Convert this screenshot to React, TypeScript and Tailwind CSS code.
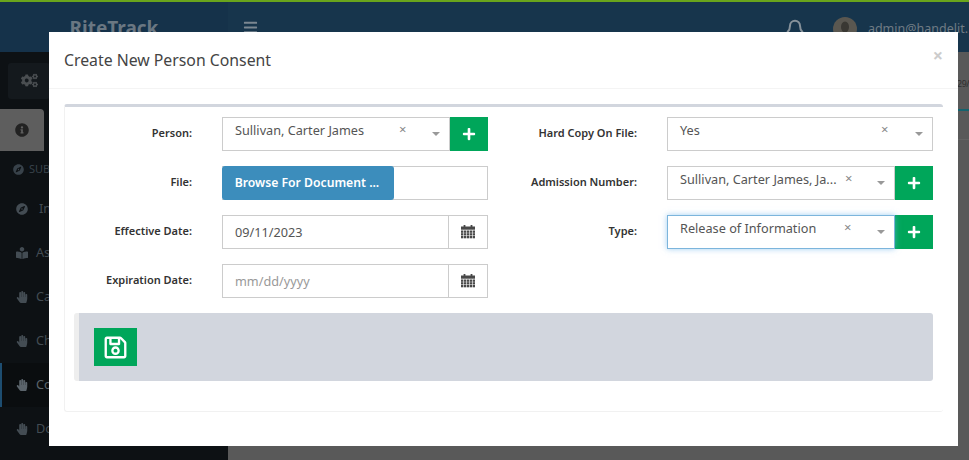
import { Bell } from "lucide-react";
import { FaBars, FaCogs, FaCompass, FaInfoCircle, FaPlus, FaRegSave, FaBookReader, FaHandPaper } from "react-icons/fa";

const font = "font-['Noto_Sans','Open_Sans',sans-serif]";

const sideItems = [
  { label: "In", Icon: FaCompass, gap: "gap-[11px]", active: false },
  { label: "As", Icon: FaBookReader, gap: "gap-[8px]", active: false },
  { label: "Ca", Icon: FaHandPaper, gap: "gap-[8px]", active: false },
  { label: "Ch", Icon: FaHandPaper, gap: "gap-[8px]", active: false },
  { label: "Co", Icon: FaHandPaper, gap: "gap-[8px]", active: true },
  { label: "Do", Icon: FaHandPaper, gap: "gap-[8px]", active: false },
];

function Label({ children, width }: { children: React.ReactNode; width: string }) {
  return <label className={`${width} shrink-0 whitespace-nowrap pb-[2px] text-right text-[11px] font-semibold text-[#333]`}>{children}</label>;
}

function Select({ value, width, xLeft, focus }: { value: string; width: string; xLeft: string; focus?: boolean }) {
  return (
    <div
      className={`relative h-[34px] ${width} shrink-0 border bg-white text-[#555] ${focus ? "border-[#7cb5dc] shadow-[0_0_6px_rgba(102,175,233,0.6)]" : "border-[#ccc]"}`}
    >
      <span className="absolute left-[12px] top-[3px] text-[12.7px] leading-[18px] whitespace-nowrap">{value}</span>
      <span className={`absolute top-[2px] text-[13px] leading-[18px] text-[#888] ${xLeft}`}>×</span>
      <span className="absolute right-[9px] top-[14px] h-0 w-0 border-x-[4px] border-t-[4px] border-x-transparent border-t-[#999]" />
    </div>
  );
}

function PlusButton() {
  return (
    <button className="flex h-[34px] w-[38px] shrink-0 items-center justify-center bg-[#00a65a] text-white">
      <FaPlus size={14} />
    </button>
  );
}

// solid grid calendar, the package ones come out too open at this size
function CalendarIcon() {
  const cols = [0, 3, 6, 9, 12];
  const rows = [5.5, 8.2, 11];
  return (
    <svg width="14" height="14" viewBox="0 0 14 14" fill="#484848">
      <rect x="0" y="1.5" width="14" height="3.2" />
      <rect x="2.6" y="0" width="1.8" height="2.6" />
      <rect x="9.6" y="0" width="1.8" height="2.6" />
      {rows.map((y) => cols.map((x) => <rect key={`${x}-${y}`} x={x} y={y} width="2.4" height="2.3" />))}
    </svg>
  );
}

function DateField({ value, placeholder }: { value?: string; placeholder?: string }) {
  return (
    <div className="flex h-[34px] w-[266px] shrink-0 border border-[#ccc] bg-white">
      <span className={`flex-1 pl-[12px] text-[12.7px] leading-[33px] ${value ? "text-[#555]" : "text-[#999]"}`}>
        {value ?? placeholder}
      </span>
      <span className="flex w-[39px] items-center justify-center border-l border-[#ccc]">
        <CalendarIcon />
      </span>
    </div>
  );
}

export default function App() {
  return (
    <div className={`relative h-[460px] w-[969px] overflow-hidden bg-[#595959] ${font}`}>
      <div className="h-[2px] bg-[#6aa51c]" />
      <header className="flex h-[50px] bg-[#17354c]">
        <div className="flex w-[228px] justify-center bg-[#15324a] pt-[14px] text-[19px] font-bold leading-[24px] text-[#6a7782]">
          RiteTrack
        </div>
        <div className="flex flex-1 items-start justify-between pl-[15px] pt-[15px] text-[#7b8791]">
          <FaBars size={15} className="mt-[3px]" />
          <div className="flex items-center gap-[28px]">
            <Bell size={20} strokeWidth={2.4} className="-mt-[1px] text-[#87929a]" />
            <div className="flex items-center gap-[11px]">
              <svg width="24" height="24" viewBox="0 0 24 24">
                <circle cx="12" cy="12" r="12" fill="#5a5750" />
                <ellipse cx="12" cy="10" rx="4" ry="5.5" fill="#3a3833" />
                <path d="M4 21c2-5 5-6 8-6s6 1 8 6a12 12 0 0 1-16 0z" fill="#33312d" />
              </svg>
              <span className="whitespace-nowrap pr-[1px] text-[12.5px] text-[#6f7b84]">admin@handelit.</span>
            </div>
          </div>
        </div>
      </header>

      <div className="flex">
        <aside className="h-[408px] w-[228px] shrink-0 bg-[#0d1114]">
          <div className="flex h-[57px] items-center pl-[8px]">
            <div className="flex h-[36px] w-[42px] items-center justify-center rounded-[3px] bg-[#14191d] text-[#4a4e51]">
              <FaCogs size={17} />
            </div>
          </div>
          <div className="flex h-[42px] w-[44px] items-center justify-center rounded-tr-[4px] bg-[#5e5e5e] text-[#222]">
            <FaInfoCircle size={14} />
          </div>
          <div className="flex h-[36px] items-center gap-[5px] pl-[13px] text-[11px] text-[#38424a]">
            <FaCompass size={11} /> SUBJECT
          </div>
          {sideItems.map(({ label, Icon, gap, active }) => (
            <div
              key={label}
              className={`flex h-[44px] items-center ${gap} text-[12.7px] ${active ? "border-l-2 border-[#1d4d70] bg-[#0a0d0f] pl-[14px] text-[#5b646b]" : "pl-[16px] text-[#434c53]"}`}
            >
              <Icon size={12} /> {label}
            </div>
          ))}
        </aside>
        <main className="flex-1 bg-[#595959] pt-[24px]">
          <div className="pl-[729px] text-[8.8px] leading-[16px] tracking-[-0.4px] text-[#2e2e2e]">29/</div>
          <div className="mt-[17px] h-[31px] border-t-[2px] border-b border-t-[#14636e] border-b-[#626262]" />
        </main>
      </div>

      {/* modal */}
      <div className="absolute left-[49px] top-[32px] h-[414px] w-[909px] bg-white text-[#333]">
        <div className="flex h-[57px] items-start justify-between border-b border-[#f4f4f4] pl-[15px] pr-[15px]">
          <h4 className="pt-[15px] text-[15.8px] leading-[26px] text-[#444]">Create New Person Consent</h4>
          <span className="pt-[13px] text-[18px] font-bold leading-[20px] text-[#ccc]">×</span>
        </div>
        <div className="ml-[15px] mt-[15px] h-[308px] w-[879px] rounded-[3px] border-b border-l border-t-[3px] border-[#f1f1f1] border-t-[#d2d6de] px-[9px]">
          <div className="mt-[10px] flex flex-col gap-[15px]">
            <div className="flex items-center">
              <Label width="w-[118px]">Person:</Label>
              <div className="ml-[30px] flex w-[266px]">
                <Select value="Sullivan, Carter James" width="w-[228px]" xLeft="left-[176px]" />
                <PlusButton />
              </div>
              <Label width="w-[149px]">Hard Copy On File:</Label>
              <div className="ml-[30px]">
                <Select value="Yes" width="w-[266px]" xLeft="left-[213px]" />
              </div>
            </div>
            <div className="flex items-center">
              <Label width="w-[118px]">File:</Label>
              <div className="ml-[30px] flex h-[34px] w-[266px] border-y border-r border-[#ccc]">
                <button className="-my-px h-[34px] w-[172px] rounded-[3px] bg-[#3c8dbc] pr-[2px] text-[12.2px] font-semibold text-white">
                  Browse For Document ...
                </button>
              </div>
              <Label width="w-[149px]">Admission Number:</Label>
              <div className="ml-[30px] flex w-[266px]">
                <Select value="Sullivan, Carter James, Ja..." width="w-[228px]" xLeft="left-[177px]" />
                <PlusButton />
              </div>
            </div>
            <div className="flex items-center">
              <Label width="w-[118px]">Effective Date:</Label>
              <div className="ml-[30px]">
                <DateField value="09/11/2023" />
              </div>
              <Label width="w-[149px]">Type:</Label>
              <div className="ml-[30px] flex w-[266px]">
                <Select value="Release of Information" width="w-[228px]" xLeft="left-[176px]" focus />
                <PlusButton />
              </div>
            </div>
            <div className="flex items-center">
              <Label width="w-[118px]">Expiration Date:</Label>
              <div className="ml-[30px]">
                <DateField placeholder="mm/dd/yyyy" />
              </div>
            </div>
          </div>
          <div className="mt-[15px] h-[68px] w-[859px] rounded-[3px] border-l-[5px] border-[#eee] bg-[#d2d6de] pl-[15px] pt-[15px]">
            <button className="flex h-[38px] w-[43px] items-center justify-center bg-[#00a65a] text-white">
              <FaRegSave size={25} />
            </button>
          </div>
        </div>
      </div>
    </div>
  );
}
